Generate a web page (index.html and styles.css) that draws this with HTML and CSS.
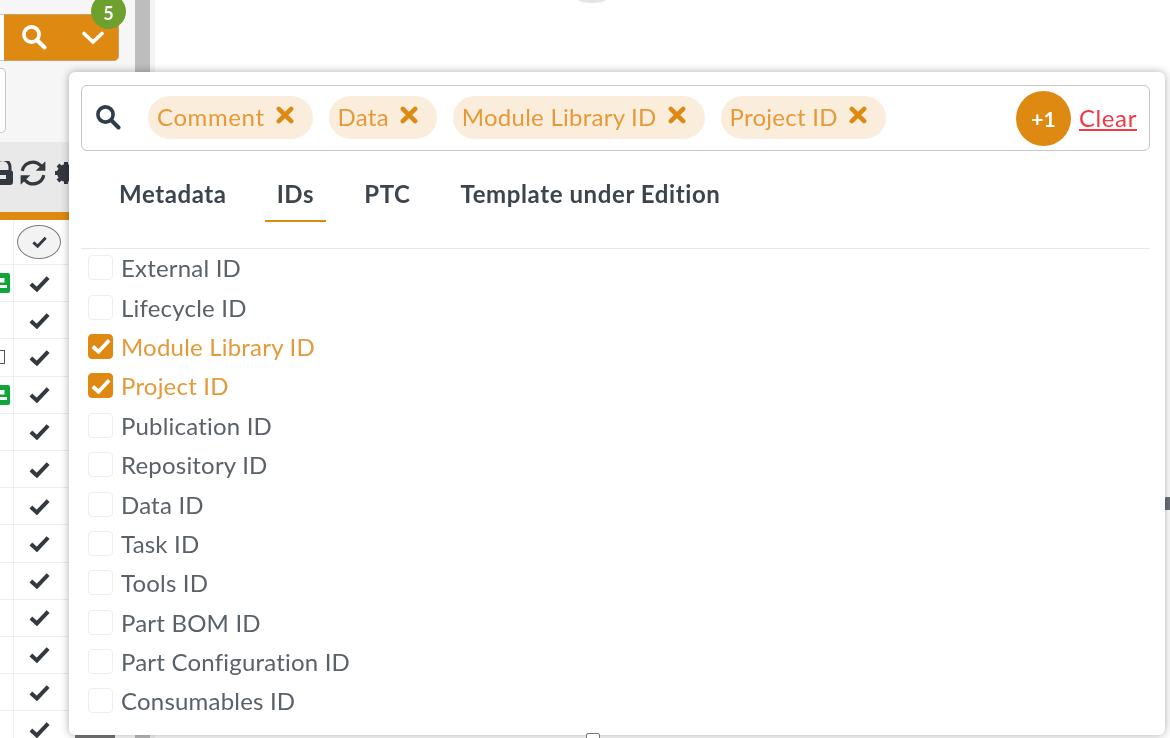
FILE: index.html
```html
<!DOCTYPE html>
<html lang="en">
<head>
<meta charset="utf-8">
<title>Column picker</title>
<link rel="stylesheet" href="styles.css">
</head>
<body>
<svg class="defs" width="0" height="0" aria-hidden="true">
  <symbol id="i-check" viewBox="0 0 20 16"><path d="M1.800 8.500l5.700 5.200L18.200 2.300" fill="none" stroke="currentColor" stroke-width="3.800"/></symbol>
  <symbol id="i-search" viewBox="0 0 26 26"><circle cx="10.500" cy="10.500" r="7.600" fill="none" stroke="currentColor" stroke-width="3.600"/><path d="M16.500 16.500l7 7" fill="none" stroke="currentColor" stroke-width="4" stroke-linecap="round"/></symbol>
  <symbol id="i-x" viewBox="0 0 16 16"><path d="M2.500 2.500l11 11M13.500 2.500l-11 11" fill="none" stroke="currentColor" stroke-width="4" stroke-linecap="round"/></symbol>
  <symbol id="i-tag" viewBox="0 0 10 20"><path d="M-1 0h9a2 2 0 0 1 2 2v16a2 2 0 0 1-2 2h-9z" fill="#0ea63b"/><rect x="0" y="5" width="4.500" height="4.500" fill="#fff"/><rect x="0" y="12" width="7" height="3" fill="#fff"/></symbol>
</svg>
<div class="page">
  <span class="top-arc"></span>
  <aside class="side">
    <div class="side-main">
      <div class="top-area">
        <div class="action-row">
          <span class="field-stub"></span>
          <div class="action-btn">
            <svg class="a-search"><use href="#i-search"/></svg>
            <svg class="a-chev" viewBox="0 0 24 14"><path d="M3 2.500l9 8.500 9-8.500" fill="none" stroke="currentColor" stroke-width="3.600" stroke-linecap="round"/></svg>
            <span class="badge">5</span>
          </div>
        </div>
        <div class="field-box"></div>
      </div>
      <div class="toolbar">
        <svg class="tool-lock" viewBox="0 0 14 24"><rect x="-10" y="9" width="23" height="15" rx="3" fill="currentColor"/><rect x="-4" y="14" width="10" height="4" fill="#e8e8e8"/><path d="M-5 9V6a6 6 0 0 1 15 0v3" fill="none" stroke="currentColor" stroke-width="3"/></svg>
        <svg class="tool-sync" viewBox="0 0 26 26"><path d="M3 11a10 10 0 0 1 17-5l3 3M23 15a10 10 0 0 1-17 5l-3-3" fill="none" stroke="currentColor" stroke-width="3"/><path d="M24.500 2v9h-9zM1.500 24v-9h9z" fill="currentColor"/></svg>
        <svg class="tool-gear" viewBox="0 0 24 24"><circle cx="12" cy="12" r="6.500" fill="none" stroke="currentColor" stroke-width="5"/><path d="M12 1v22M1 12h22M4 4l16 16M20 4L4 20" stroke="currentColor" stroke-width="4"/></svg>
      </div>
      <div class="table">
        <div class="row head"><span class="cell-a"></span><span class="cell-b"><span class="pill-check"><svg class="chk-s"><use href="#i-check"/></svg></span></span></div>
        <div class="row"><span class="cell-a"><svg class="tag"><use href="#i-tag"/></svg></span><span class="cell-b"><svg class="chk"><use href="#i-check"/></svg></span></div>
        <div class="row"><span class="cell-a"></span><span class="cell-b"><svg class="chk"><use href="#i-check"/></svg></span></div>
        <div class="row"><span class="cell-a"><span class="small-box"></span></span><span class="cell-b"><svg class="chk"><use href="#i-check"/></svg></span></div>
        <div class="row"><span class="cell-a"><svg class="tag"><use href="#i-tag"/></svg></span><span class="cell-b"><svg class="chk"><use href="#i-check"/></svg></span></div>
        <div class="row"><span class="cell-a"></span><span class="cell-b"><svg class="chk"><use href="#i-check"/></svg></span></div>
        <div class="row"><span class="cell-a"></span><span class="cell-b"><svg class="chk"><use href="#i-check"/></svg></span></div>
        <div class="row"><span class="cell-a"></span><span class="cell-b"><svg class="chk"><use href="#i-check"/></svg></span></div>
        <div class="row"><span class="cell-a"></span><span class="cell-b"><svg class="chk"><use href="#i-check"/></svg></span></div>
        <div class="row"><span class="cell-a"></span><span class="cell-b"><svg class="chk"><use href="#i-check"/></svg></span></div>
        <div class="row"><span class="cell-a"></span><span class="cell-b"><svg class="chk"><use href="#i-check"/></svg></span></div>
        <div class="row"><span class="cell-a"></span><span class="cell-b"><svg class="chk"><use href="#i-check"/></svg></span></div>
        <div class="row"><span class="cell-a"></span><span class="cell-b"><svg class="chk"><use href="#i-check"/></svg></span></div>
        <div class="row"><span class="cell-a"></span><span class="cell-b"><svg class="chk"><use href="#i-check"/></svg></span></div>
      </div>
    </div>
    <div class="scrollbar"></div>
  </aside>
  <main class="canvas"></main>
  <span class="edge-mark"></span>
  <span class="bottom-block"></span>

  <section class="popover">
    <div class="search-bar">
      <svg class="s-icon"><use href="#i-search"/></svg>
      <div class="chips">
        <span class="chip chip-wide">Comment<svg class="x"><use href="#i-x"/></svg></span>
        <span class="chip">Data<svg class="x"><use href="#i-x"/></svg></span>
        <span class="chip">Module Library ID<svg class="x"><use href="#i-x"/></svg></span>
        <span class="chip">Project ID<svg class="x"><use href="#i-x"/></svg></span>
      </div>
      <span class="more">+1</span>
      <a class="clear" href="#">Clear</a>
    </div>
    <nav class="tabs">
      <span class="tab">Metadata</span>
      <span class="tab active">IDs</span>
      <span class="tab">PTC</span>
      <span class="tab">Template under Edition</span>
    </nav>
    <ul class="list">
      <li class="item"><span class="box"></span>External ID</li>
      <li class="item"><span class="box"></span>Lifecycle ID</li>
      <li class="item on"><span class="box"><svg class="box-chk"><use href="#i-check"/></svg></span>Module Library ID</li>
      <li class="item on"><span class="box"><svg class="box-chk"><use href="#i-check"/></svg></span>Project ID</li>
      <li class="item"><span class="box"></span>Publication ID</li>
      <li class="item"><span class="box"></span>Repository ID</li>
      <li class="item"><span class="box"></span>Data ID</li>
      <li class="item"><span class="box"></span>Task ID</li>
      <li class="item"><span class="box"></span>Tools ID</li>
      <li class="item"><span class="box"></span>Part BOM ID</li>
      <li class="item"><span class="box"></span>Part Configuration ID</li>
      <li class="item"><span class="box"></span>Consumables ID</li>
    </ul>
  </section>
  <span class="handle"></span>
</div>
</body>
</html>
```

FILE: styles.css
```css
* { box-sizing: border-box; }
html, body { margin: 0; padding: 0; background: #fff; }
body { font-family: "Lato", "Liberation Sans", sans-serif; overflow: hidden; }
.defs { position: absolute; }
.page { position: relative; display: flex; width: 1170px; height: 738px; overflow: hidden; filter: blur(0.5px); }
.top-arc { position: absolute; left: 578px; top: -4px; width: 28px; height: 7px; border-radius: 50%; background: #e4e4e4; }

.side { display: flex; width: 157px; flex: none; }
.side-main { width: 135px; flex: none; display: flex; flex-direction: column; background: #f6f6f6; }
.scrollbar { width: 15px; background: #bdbdbd; margin-right: 7px; box-shadow: 5px 0 0 #f4f4f4; }
.canvas { flex: 1; background: #fff; }

.top-area { height: 142px; flex: none; padding-top: 14px; display: flex; flex-direction: column; gap: 7px; }
.action-row { display: flex; height: 47px; }
.field-stub { width: 4px; background: #fff; border-top: 1px solid #c8c8c8; border-bottom: 1px solid #c8c8c8; flex: none; }
.action-btn { position: relative; width: 115px; height: 47px; background: #de8a12; border: 1px solid #c9a060; border-left: 0; border-radius: 0 5px 5px 0; color: #fff; display: flex; align-items: center; padding-left: 17px; }
.a-search { width: 26px; height: 26px; margin-top: -2px; }
.a-chev { width: 24px; height: 14px; margin-left: 34px; }
.badge { position: absolute; left: 87px; top: -21px; width: 35px; height: 35px; border-radius: 50%; background: #6da02d; color: #fff; font-size: 18px; font-weight: 700; display: flex; align-items: center; justify-content: center; padding-top: 3px; }
.field-box { width: 6px; height: 65px; background: #fff; border: 1px solid #c8c8c8; border-left: 0; border-radius: 0 5px 5px 0; }

.toolbar { height: 70px; flex: none; background: #e9e9e9; display: flex; align-items: flex-start; padding-top: 19px; color: #33393f; }
.tool-lock { width: 14px; height: 24px; flex: none; }
.tool-sync { width: 28px; height: 28px; flex: none; margin-left: 5px; margin-top: -2px; }
.tool-gear { width: 24px; height: 24px; flex: none; margin-left: 7px; }

.table { flex: none; background: #fff; border-top: 8px solid #de8a12; }
.row { display: flex; height: 37.2px; border-bottom: 1px solid #eceef2; }
.row.head { height: 45px; }
.cell-a { width: 14px; border-right: 1px solid #eceef2; display: flex; align-items: center; justify-content: flex-end; flex: none; }
.cell-b { width: 50px; display: flex; align-items: center; justify-content: center; flex: none; color: #33393f; }
.chk { width: 21px; height: 17px; }
.chk-s { width: 15px; height: 12px; }
.pill-check { width: 44px; height: 34px; border: 1px solid #7d7d7d; border-radius: 50%; background: #f3f3f3; display: flex; align-items: center; justify-content: center; flex: none; color: #33393f; }
.tag { width: 10px; height: 20px; margin-right: 3px; flex: none; }
.small-box { width: 6px; height: 14px; background: #fff; border: 1px solid #555; border-left: 0; margin-right: 8px; }

.edge-mark { position: absolute; left: 1164px; top: 497px; width: 6px; height: 13px; background: #6c7278; border-radius: 3px 0 0 0; }
.bottom-block { position: absolute; left: 75px; top: 735px; width: 40px; height: 3px; background: #777; }

.popover { position: absolute; left: 69px; top: 72px; width: 1096px; height: 663px; background: #fff; border-radius: 6px; box-shadow: 0 0 9px rgba(0, 0, 0, 0.32); padding: 13px 15px 0 12px; }
.search-bar { height: 66px; border: 1px solid #c6c6c6; border-radius: 6px; display: flex; align-items: center; padding: 0 12px 0 13px; }
.s-icon { width: 26px; height: 26px; color: #2f3d4a; flex: none; margin-top: -2px; }
.chips { display: flex; gap: 16px; margin-left: 27px; flex: 1; margin-top: -2px; }
.chip { height: 43px; border-radius: 22px; background: #fbeddc; color: #e59a3a; font-size: 24px; letter-spacing: 0.25px; display: flex; align-items: center; padding: 0 19px 1px 9px; white-space: nowrap; }
.chip-wide { letter-spacing: 0.6px; }
.x { width: 18px; height: 18px; color: #de8a12; margin-left: 11px; margin-top: -3px; flex: none; }
.more { width: 55px; height: 55px; border-radius: 50%; background: #de8a12; color: #fff; font-weight: 700; font-size: 21px; display: flex; align-items: center; justify-content: center; flex: none; }
.clear { color: #f03a47; font-size: 24px; letter-spacing: 0.6px; margin-left: 8px; margin-top: -2px; }

.tabs { display: flex; height: 98px; border-bottom: 1px solid #e8e8e8; padding: 22px 0 0 26px; }
.tab { height: 49px; padding: 0 12px; margin-right: 26px; font-size: 24px; font-weight: 700; letter-spacing: 0.6px; color: #3c444c; line-height: 42px; }
.tab.active { border-bottom: 2px solid #de8a12; }

.list { list-style: none; margin: -1px 0 0; padding: 0 0 0 7px; }
.item { display: flex; align-items: center; height: 39.4px; font-size: 24px; letter-spacing: 0.2px; color: #5a6169; }
.item.on { color: #e59a3a; }
.box { width: 25px; height: 25px; border: 1px solid #eeeeee; border-radius: 4px; margin-right: 8px; flex: none; display: flex; align-items: center; justify-content: center; }
.item.on .box { background: #de8a12; border-color: #de8a12; color: #fff; }
.box-chk { width: 20px; height: 16px; }

.handle { position: absolute; left: 586px; top: 733px; width: 14px; height: 8px; background: #fff; border: 1px solid #777; border-radius: 2px; }
```
